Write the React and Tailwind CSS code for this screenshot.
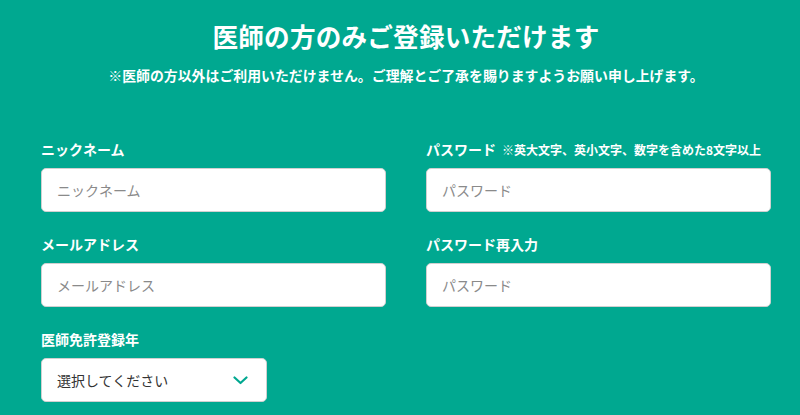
export default function App() {
  const font = { fontFamily: '"Noto Sans CJK JP", "Noto Sans", sans-serif' };
  const inputCls =
    "w-full h-[44px] rounded-[5px] border border-[#d0d0d0] bg-white px-[15px] text-[14px] text-[#333] placeholder:text-[#8a8a8a] outline-none";
  const labelCls = "text-[14px] font-bold text-white leading-[20px] h-[20px] mb-[9px] flex items-baseline";
  return (
    <div className="w-[800px] h-[415px] bg-[#00a890] overflow-hidden" style={font}>
      <div className="pt-[17px] pl-[12px] text-center">
        <h1 className="text-[25.6px] font-bold text-white leading-[38px] tracking-[0.2px]">
          医師の方のみご登録いただけます
        </h1>
        <p className="mt-[10px] text-[13.9px] font-bold text-white leading-[20px]">
          ※医師の方以外はご利用いただけません。ご理解とご了承を賜りますようお願い申し上げます。
        </p>
      </div>
      <div className="pl-[41px] pt-[54px] w-[771px]">
        <div className="grid grid-cols-2 gap-x-[40px] gap-y-[22px]">
          <div>
            <div className={labelCls}>ニックネーム</div>
            <input className={inputCls} placeholder="ニックネーム" />
          </div>
          <div>
            <div className={labelCls}>
              パスワード
              <span className="ml-[6px] text-[12px]">※英大文字、英小文字、数字を含めた8文字以上</span>
            </div>
            <input className={inputCls} type="password" placeholder="パスワード" />
          </div>
          <div>
            <div className={labelCls}>メールアドレス</div>
            <input className={inputCls} placeholder="メールアドレス" />
          </div>
          <div>
            <div className={labelCls}>パスワード再入力</div>
            <input className={inputCls} type="password" placeholder="パスワード" />
          </div>
          <div>
            <div className={labelCls}>医師免許登録年</div>
            <div className="w-[226px] h-[44px] rounded-[5px] border border-[#d0d0d0] bg-white pl-[15px] pr-[18px] flex items-center justify-between">
              <span className="text-[14px] text-[#333]">選択してください</span>
              <svg width="15" height="9" viewBox="0 0 15 9" fill="none">
                <path d="M1.5 1.5 L7.5 7 L13.5 1.5" stroke="#00a890" strokeWidth="2.2" strokeLinecap="round" strokeLinejoin="round" />
              </svg>
            </div>
          </div>
        </div>
      </div>
    </div>
  );
}
